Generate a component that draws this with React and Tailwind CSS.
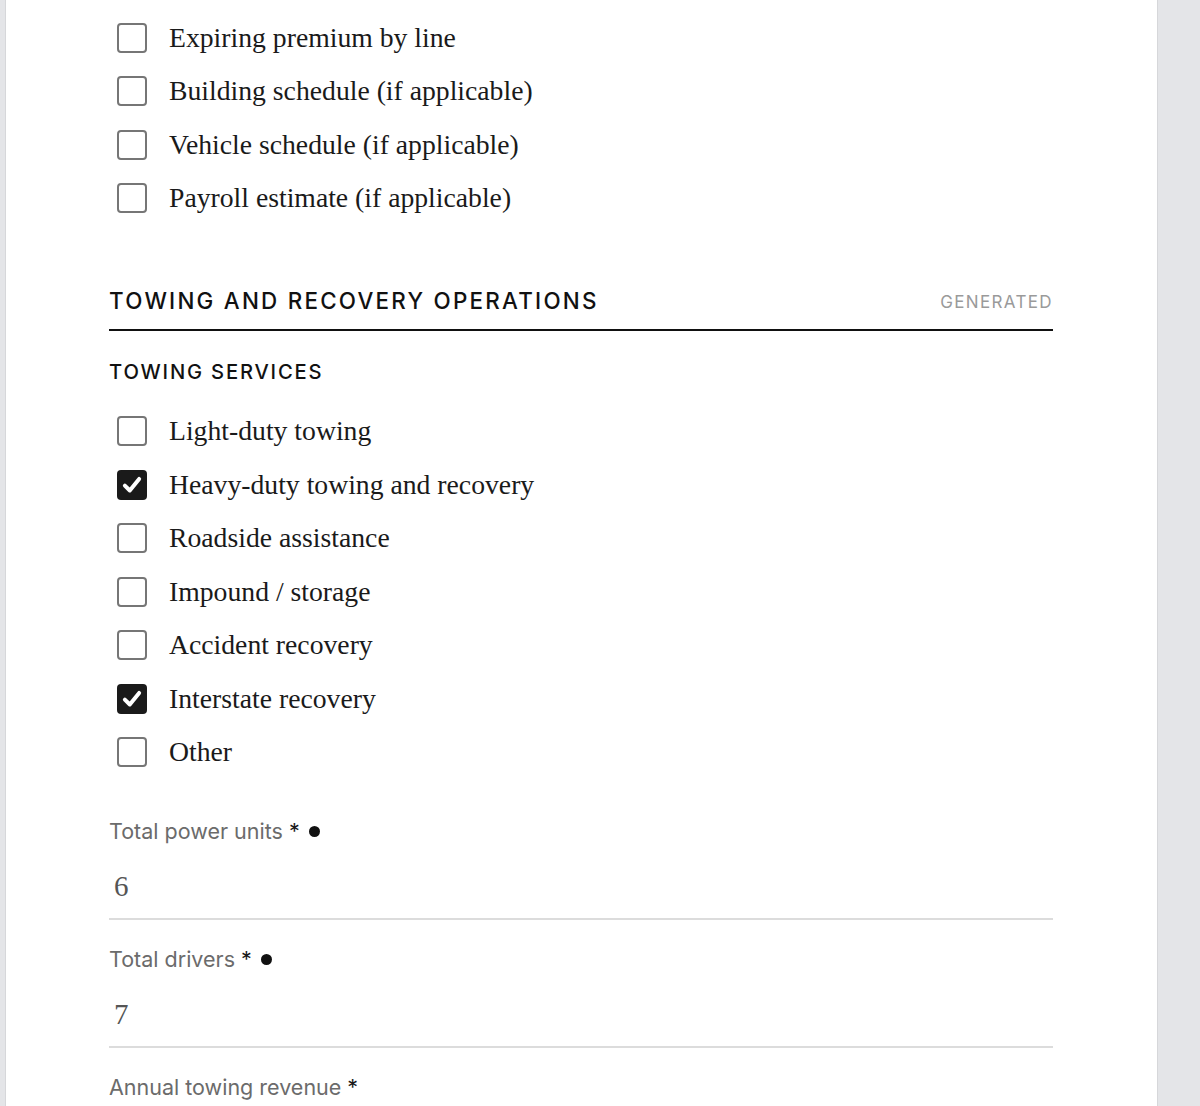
import React from "react";

const serif = { fontFamily: '"Liberation Serif", "Times New Roman", serif' };

function Box({ checked }) {
  if (checked) {
    return (
      <span className="flex h-[30px] w-[30px] shrink-0 items-center justify-center rounded-[4px] bg-[#1a1a1a]">
        <svg width="22" height="22" viewBox="0 0 20 20" fill="none">
          <path d="M3.5 10.5 L8 15 L16.5 4.5" stroke="white" strokeWidth="3.6" strokeLinecap="round" strokeLinejoin="round" />
        </svg>
      </span>
    );
  }
  return <span className="h-[30px] w-[30px] shrink-0 rounded-[4px] border-2 border-[#767676] bg-white" />;
}

function Row({ label, checked }) {
  return (
    <div className="flex h-[30px] items-center gap-[22px] pl-[8px]">
      <Box checked={checked} />
      <span className="text-[27.7px] leading-none text-[#1a1a1a]" style={serif}>{label}</span>
    </div>
  );
}

function Label({ label, dot }) {
  return (
    <div className="flex h-[30px] items-center text-[21.5px] text-[#6b6b6b]">
      <span>{label}</span>
      <span className="ml-[6px] text-[#1a1a1a]">*</span>
      {dot && <span className="ml-[9px] h-[11px] w-[11px] rounded-full bg-[#111]" />}
    </div>
  );
}

function Field({ label, value, dot }) {
  return (
    <div className="flex flex-col">
      <Label label={label} dot={dot} />
      <div className="mt-[25px] h-[30px] pl-[5px] text-[29px] leading-[30px] text-[#555]" style={serif}>{value}</div>
      <div className="mt-[17px] h-[2px] bg-[#dcdcdc]" />
    </div>
  );
}

export default function App() {
  return (
    <div className="flex min-h-screen bg-[#e4e5e8]" style={{ fontFamily: 'Inter, "Noto Sans", sans-serif' }}>
      <div className="ml-[5px] w-[1153px] border-x border-[#d6d7da] bg-white pl-[103px] pr-[104px]">
        <div className="flex flex-col gap-[23.5px] pt-[22.5px]">
          <Row label="Expiring premium by line" />
          <Row label="Building schedule (if applicable)" />
          <Row label="Vehicle schedule (if applicable)" />
          <Row label="Payroll estimate (if applicable)" />
        </div>

        <div className="mt-[73px] flex items-end justify-between border-b-2 border-[#111] pb-[13px]">
          <span className="text-[22.4px] font-medium uppercase leading-[30px] tracking-[0.1em] text-[#111]">Towing and Recovery Operations</span>
          <span className="text-[17px] uppercase leading-[28px] tracking-[0.08em] text-[#9a9a9a]">Generated</span>
        </div>

        <div className="mt-[27px] h-[28px] text-[20.2px] font-medium uppercase leading-[28px] tracking-[0.09em] text-[#111]">Towing Services</div>

        <div className="mt-[30px] flex flex-col gap-[23.5px]">
          <Row label="Light-duty towing" />
          <Row label="Heavy-duty towing and recovery" checked />
          <Row label="Roadside assistance" />
          <Row label="Impound / storage" />
          <Row label="Accident recovery" />
          <Row label="Interstate recovery" checked />
          <Row label="Other" />
        </div>

        <div className="mt-[49px] flex flex-col gap-[24px]">
          <Field label="Total power units" value="6" dot />
          <Field label="Total drivers" value="7" dot />
          <Label label="Annual towing revenue" />
        </div>
      </div>
    </div>
  );
}
